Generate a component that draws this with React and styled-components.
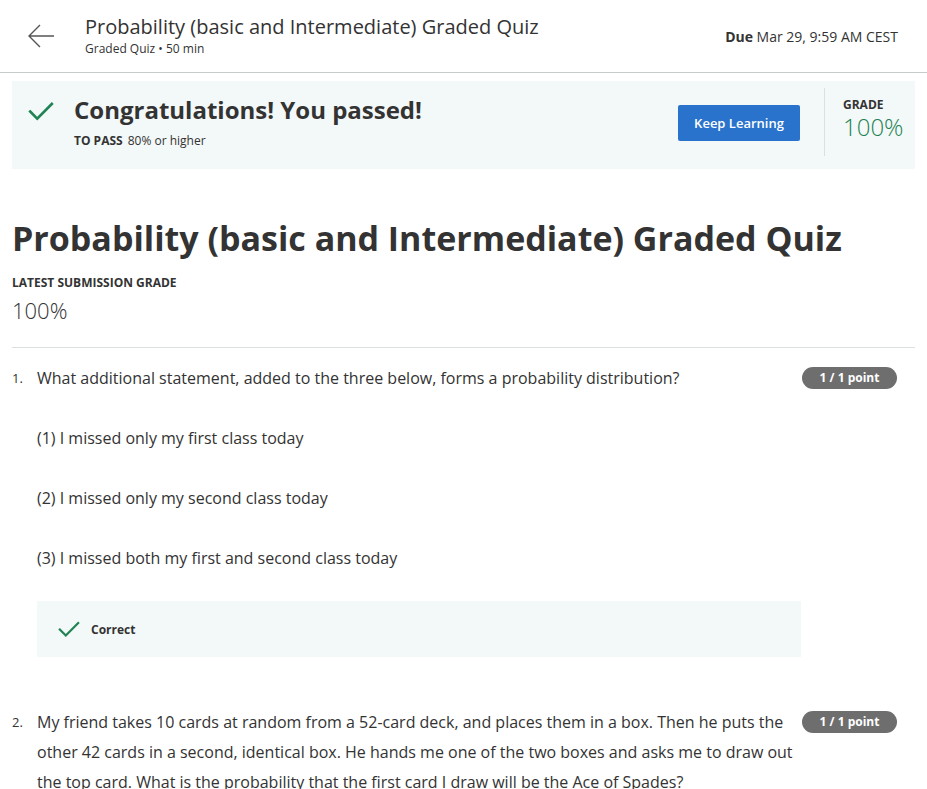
import React from "react";
import styled, { createGlobalStyle } from "styled-components";

const GlobalStyle = createGlobalStyle`
  body {
    margin: 0;
    background: #fff;
    font-family: "Open Sans", "Noto Sans", sans-serif;
    color: #333;
  }
`;

const Header = styled.header`
  display: flex;
  align-items: center;
  height: 72px;
  border-bottom: 1px solid #c8cbcc;
  padding: 0 29px 0 28px;
`;

const BackButton = styled.button`
  border: none;
  background: none;
  padding: 0;
  width: 28px;
  height: 28px;
  display: flex;
  align-items: center;
  cursor: pointer;
  margin-right: 29px;
`;

const HeaderText = styled.div`
  flex: 1;
  display: flex;
  flex-direction: column;
  margin-top: -2px;
`;

const HeaderTitle = styled.h2`
  margin: 0;
  font-size: 20px;
  font-weight: 400;
  line-height: 26px;
  color: #333;
`;

const HeaderSub = styled.div`
  font-size: 12px;
  line-height: 16px;
  margin-top: 1px;
  color: #333;
`;

const Due = styled.div`
  font-size: 14px;
  color: #333;
  b {
    font-weight: 700;
  }
`;

const Main = styled.main`
  padding: 8px 12px 0 12px;
`;

const Banner = styled.section`
  display: flex;
  align-items: center;
  background: #f3f8f8;
  height: 88px;
  padding: 0 0 0 16px;
`;

const BannerLeft = styled.div`
  flex: 1;
  display: flex;
  align-items: flex-start;
  gap: 20px;
  margin-top: -8px;
`;

const CheckWrap = styled.div`
  margin-top: 4px;
`;

const BannerTitle = styled.h3`
  margin: 0;
  font-size: 24px;
  font-weight: 700;
  line-height: 32px;
  color: #333;
`;

const PassLine = styled.div`
  font-size: 12px;
  margin-top: 6px;
  b {
    font-weight: 700;
    margin-right: 5px;
  }
`;

const KeepButton = styled.button`
  background: #2a73cc;
  color: #fff;
  border: none;
  border-radius: 2px;
  width: 122px;
  height: 36px;
  font-family: inherit;
  font-size: 13px;
  font-weight: 600;
  cursor: pointer;
  margin-top: -5px;
  margin-right: 24px;
`;

const GradeBox = styled.div`
  align-self: stretch;
  margin: 7px 0 13px;
  border-left: 1px solid #dcdfe0;
  padding: 9px 0 0 18px;
  width: 72px;
`;

const Label = styled.div`
  font-size: 12px;
  font-weight: 700;
  text-transform: uppercase;
  color: #333;
  line-height: 16px;
`;

const GradeValue = styled.div`
  font-size: 24px;
  font-weight: 300;
  color: #1f8354;
  line-height: 28px;
`;

const PageTitle = styled.h1`
  margin: 47px 0 0;
  font-size: 34px;
  font-weight: 700;
  line-height: 44px;
  color: #333;
`;

const Summary = styled.div`
  margin-top: 15px;
  padding-bottom: 22px;
  border-bottom: 1px solid #dcdfe0;
`;

const SummaryValue = styled.div`
  font-size: 22px;
  font-weight: 300;
  line-height: 30px;
  margin-top: 4px;
  color: #333;
`;

const Question = styled.div`
  display: flex;
  align-items: flex-start;
  padding-top: ${(p) => p.$top}px;
`;

const QNum = styled.div`
  width: 25px;
  font-size: 13px;
  line-height: 30px;
  flex-shrink: 0;
`;

const QBody = styled.div`
  flex: 1;
  min-width: 0;
`;

const QRow = styled.div`
  display: flex;
  align-items: flex-start;
  justify-content: space-between;
`;

const QText = styled.div`
  font-size: 16px;
  line-height: 30px;
  max-width: 758px;
  color: #333;
`;

const Points = styled.span`
  flex-shrink: 0;
  background: #6e6e6e;
  color: #fff;
  font-size: 12px;
  font-weight: 700;
  border-radius: 11px;
  height: 22px;
  line-height: 22px;
  width: 95px;
  text-align: center;
  margin-top: 4px;
  margin-right: 18px;
`;

const Option = styled.div`
  font-size: 16px;
  line-height: 22px;
  margin-top: ${(p) => (p.$first ? 34 : 38)}px;
`;

const Feedback = styled.div`
  display: flex;
  align-items: center;
  gap: 11px;
  background: #f3f8f8;
  height: 56px;
  width: 764px;
  padding-left: 21px;
  box-sizing: border-box;
  margin-top: 32px;
  font-size: 12px;
  font-weight: 700;
`;

const Check = ({ size }) => (
  <svg width={size} height={size} viewBox="0 0 24 24" fill="none">
    <path
      d="M2 12.5 L8.5 19 L22 5.5"
      stroke="#1f8354"
      strokeWidth="2.4"
      strokeLinecap="square"
    />
  </svg>
);

const questions = [
  {
    n: 1,
    text: "What additional statement, added to the three below, forms a probability distribution?",
    options: [
      "(1) I missed only my first class today",
      "(2) I missed only my second class today",
      "(3) I missed both my first and second class today",
    ],
    correct: true,
  },
  {
    n: 2,
    text: "My friend takes 10 cards at random from a 52-card deck, and places them in a box. Then he puts the other 42 cards in a second, identical box. He hands me one of the two boxes and asks me to draw out the top card. What is the probability that the first card I draw will be the Ace of Spades?",
    options: [],
  },
];

export default function App() {
  return (
    <>
      <GlobalStyle />
      <Header>
        <BackButton aria-label="Back">
          <svg width="26" height="24" viewBox="0 0 26 24" fill="none">
            <path d="M1 12 H26 M12 1 L1 12 L12 23" stroke="#555" strokeWidth="1.4" />
          </svg>
        </BackButton>
        <HeaderText>
          <HeaderTitle>Probability (basic and Intermediate) Graded Quiz</HeaderTitle>
          <HeaderSub>Graded Quiz • 50 min</HeaderSub>
        </HeaderText>
        <Due>
          <b>Due</b> Mar 29, 9:59 AM CEST
        </Due>
      </Header>
      <Main>
        <Banner>
          <BannerLeft>
            <CheckWrap>
              <Check size={26} />
            </CheckWrap>
            <div>
              <BannerTitle>Congratulations! You passed!</BannerTitle>
              <PassLine>
                <b>TO PASS</b>80% or higher
              </PassLine>
            </div>
          </BannerLeft>
          <KeepButton>Keep Learning</KeepButton>
          <GradeBox>
            <Label>Grade</Label>
            <GradeValue>100%</GradeValue>
          </GradeBox>
        </Banner>
        <PageTitle>Probability (basic and Intermediate) Graded Quiz</PageTitle>
        <Summary>
          <Label>Latest Submission Grade</Label>
          <SummaryValue>100%</SummaryValue>
        </Summary>
        {questions.map((q) => (
          <Question key={q.n} $top={q.n === 1 ? 15 : 50}>
            <QNum>{q.n}.</QNum>
            <QBody>
              <QRow>
                <QText>{q.text}</QText>
                <Points>1 / 1 point</Points>
              </QRow>
              {q.options.map((o, i) => (
                <Option key={o} $first={i === 0}>
                  {o}
                </Option>
              ))}
              {q.correct && (
                <Feedback>
                  <Check size={22} />
                  Correct
                </Feedback>
              )}
            </QBody>
          </Question>
        ))}
      </Main>
    </>
  );
}
